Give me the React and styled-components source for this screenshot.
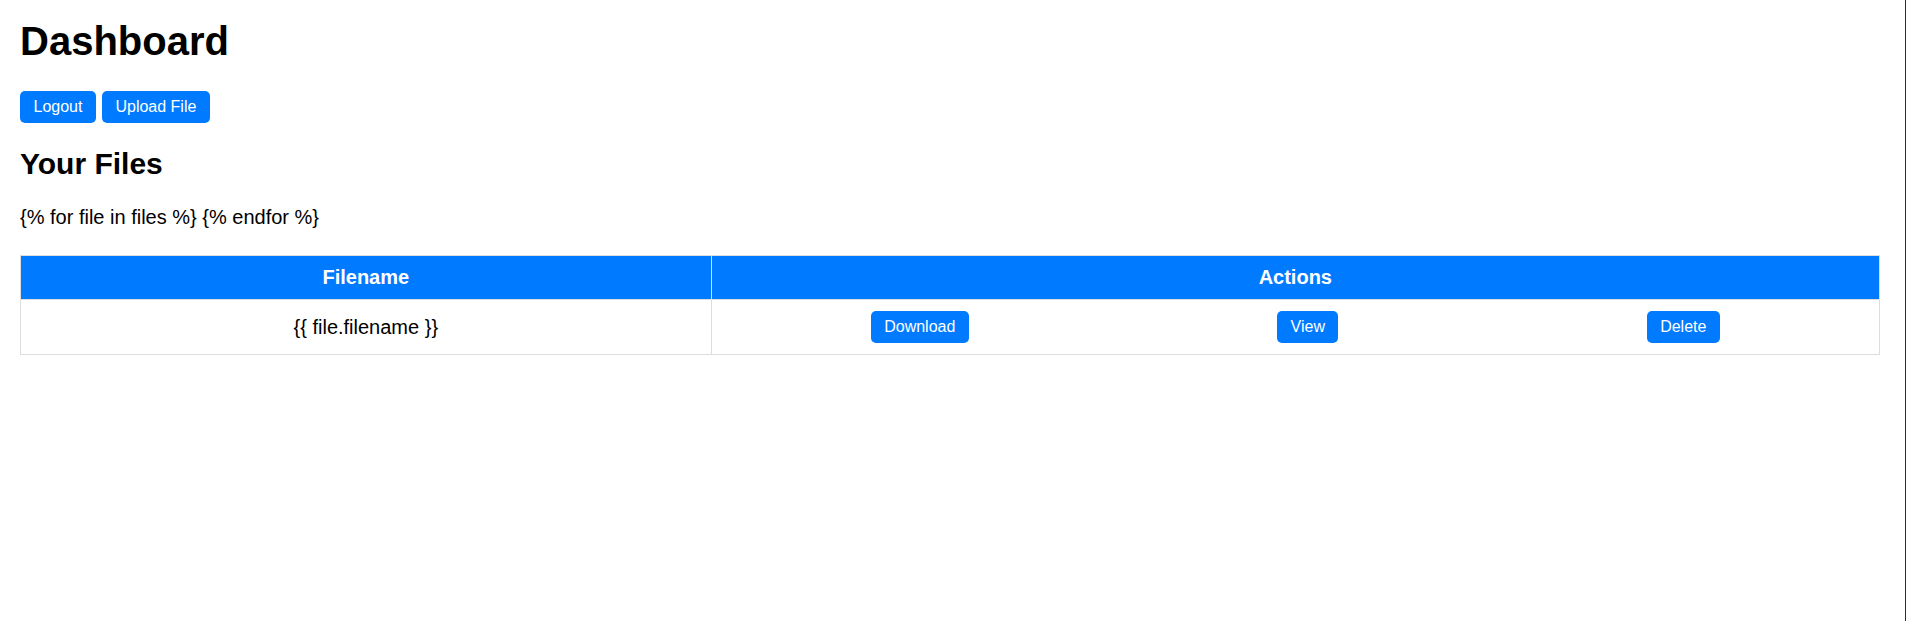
import React from 'react';
import styled, { createGlobalStyle } from 'styled-components';

const GlobalStyle = createGlobalStyle`
  html, body {
    margin: 0;
    padding: 0;
    background: #ffffff;
  }
  body {
    font-family: "Liberation Sans", Arial, sans-serif;
    color: #000000;
  }
`;

const Page = styled.div`
  box-sizing: border-box;
  min-height: 100vh;
  padding: 18px 25px 20px 20px;
  border-right: 1px solid #2e2e2e;
`;

const Title = styled.h1`
  margin: 0 0 27px;
  font-size: 40px;
  font-weight: bold;
  line-height: 46px;
`;

const Toolbar = styled.div`
  display: flex;
  gap: 6px;
  margin-bottom: 24px;
`;

const Button = styled.button`
  font-family: "Liberation Sans", Arial, sans-serif;
  font-size: 16px;
  line-height: 18px;
  padding: 7px 13.5px;
  border: none;
  border-radius: 5px;
  background: #007bff;
  color: #ffffff;
  cursor: pointer;
  &:hover {
    background: #0069d9;
  }
`;

const SectionTitle = styled.h2`
  margin: 0 0 25px;
  font-size: 30px;
  font-weight: bold;
  line-height: 34px;
`;

const Note = styled.p`
  margin: 0 0 26px;
  font-size: 20px;
  line-height: 23px;
`;

const Table = styled.table`
  width: 100%;
  border-collapse: collapse;
  font-size: 20px;
`;

const HeadCell = styled.th`
  width: ${props => props.width || 'auto'};
  padding: 10px;
  border: 1px solid #dddddd;
  background: #007bff;
  color: #ffffff;
  font-weight: bold;
  line-height: 23px;
  text-align: center;
`;

const Cell = styled.td`
  padding: ${props => (props.actions ? '11px 5px' : '11px 10px')};
  border: 1px solid #dddddd;
  line-height: 23px;
  text-align: center;
`;

const Actions = styled.div`
  display: flex;
  justify-content: space-around;
  align-items: center;
`;

export default function App() {
  return (
    <>
      <GlobalStyle />
      <Page>
        <Title>Dashboard</Title>
        <Toolbar>
          <Button>Logout</Button>
          <Button>Upload File</Button>
        </Toolbar>
        <SectionTitle>Your Files</SectionTitle>
        <Note>{'{% for file in files %} {% endfor %}'}</Note>
        <Table>
          <thead>
            <tr>
              <HeadCell width="37.15%">Filename</HeadCell>
              <HeadCell>Actions</HeadCell>
            </tr>
          </thead>
          <tbody>
            <tr>
              <Cell>{'{{ file.filename }}'}</Cell>
              <Cell actions>
                <Actions>
                  <Button>Download</Button>
                  <Button>View</Button>
                  <Button>Delete</Button>
                </Actions>
              </Cell>
            </tr>
          </tbody>
        </Table>
      </Page>
    </>
  );
}
